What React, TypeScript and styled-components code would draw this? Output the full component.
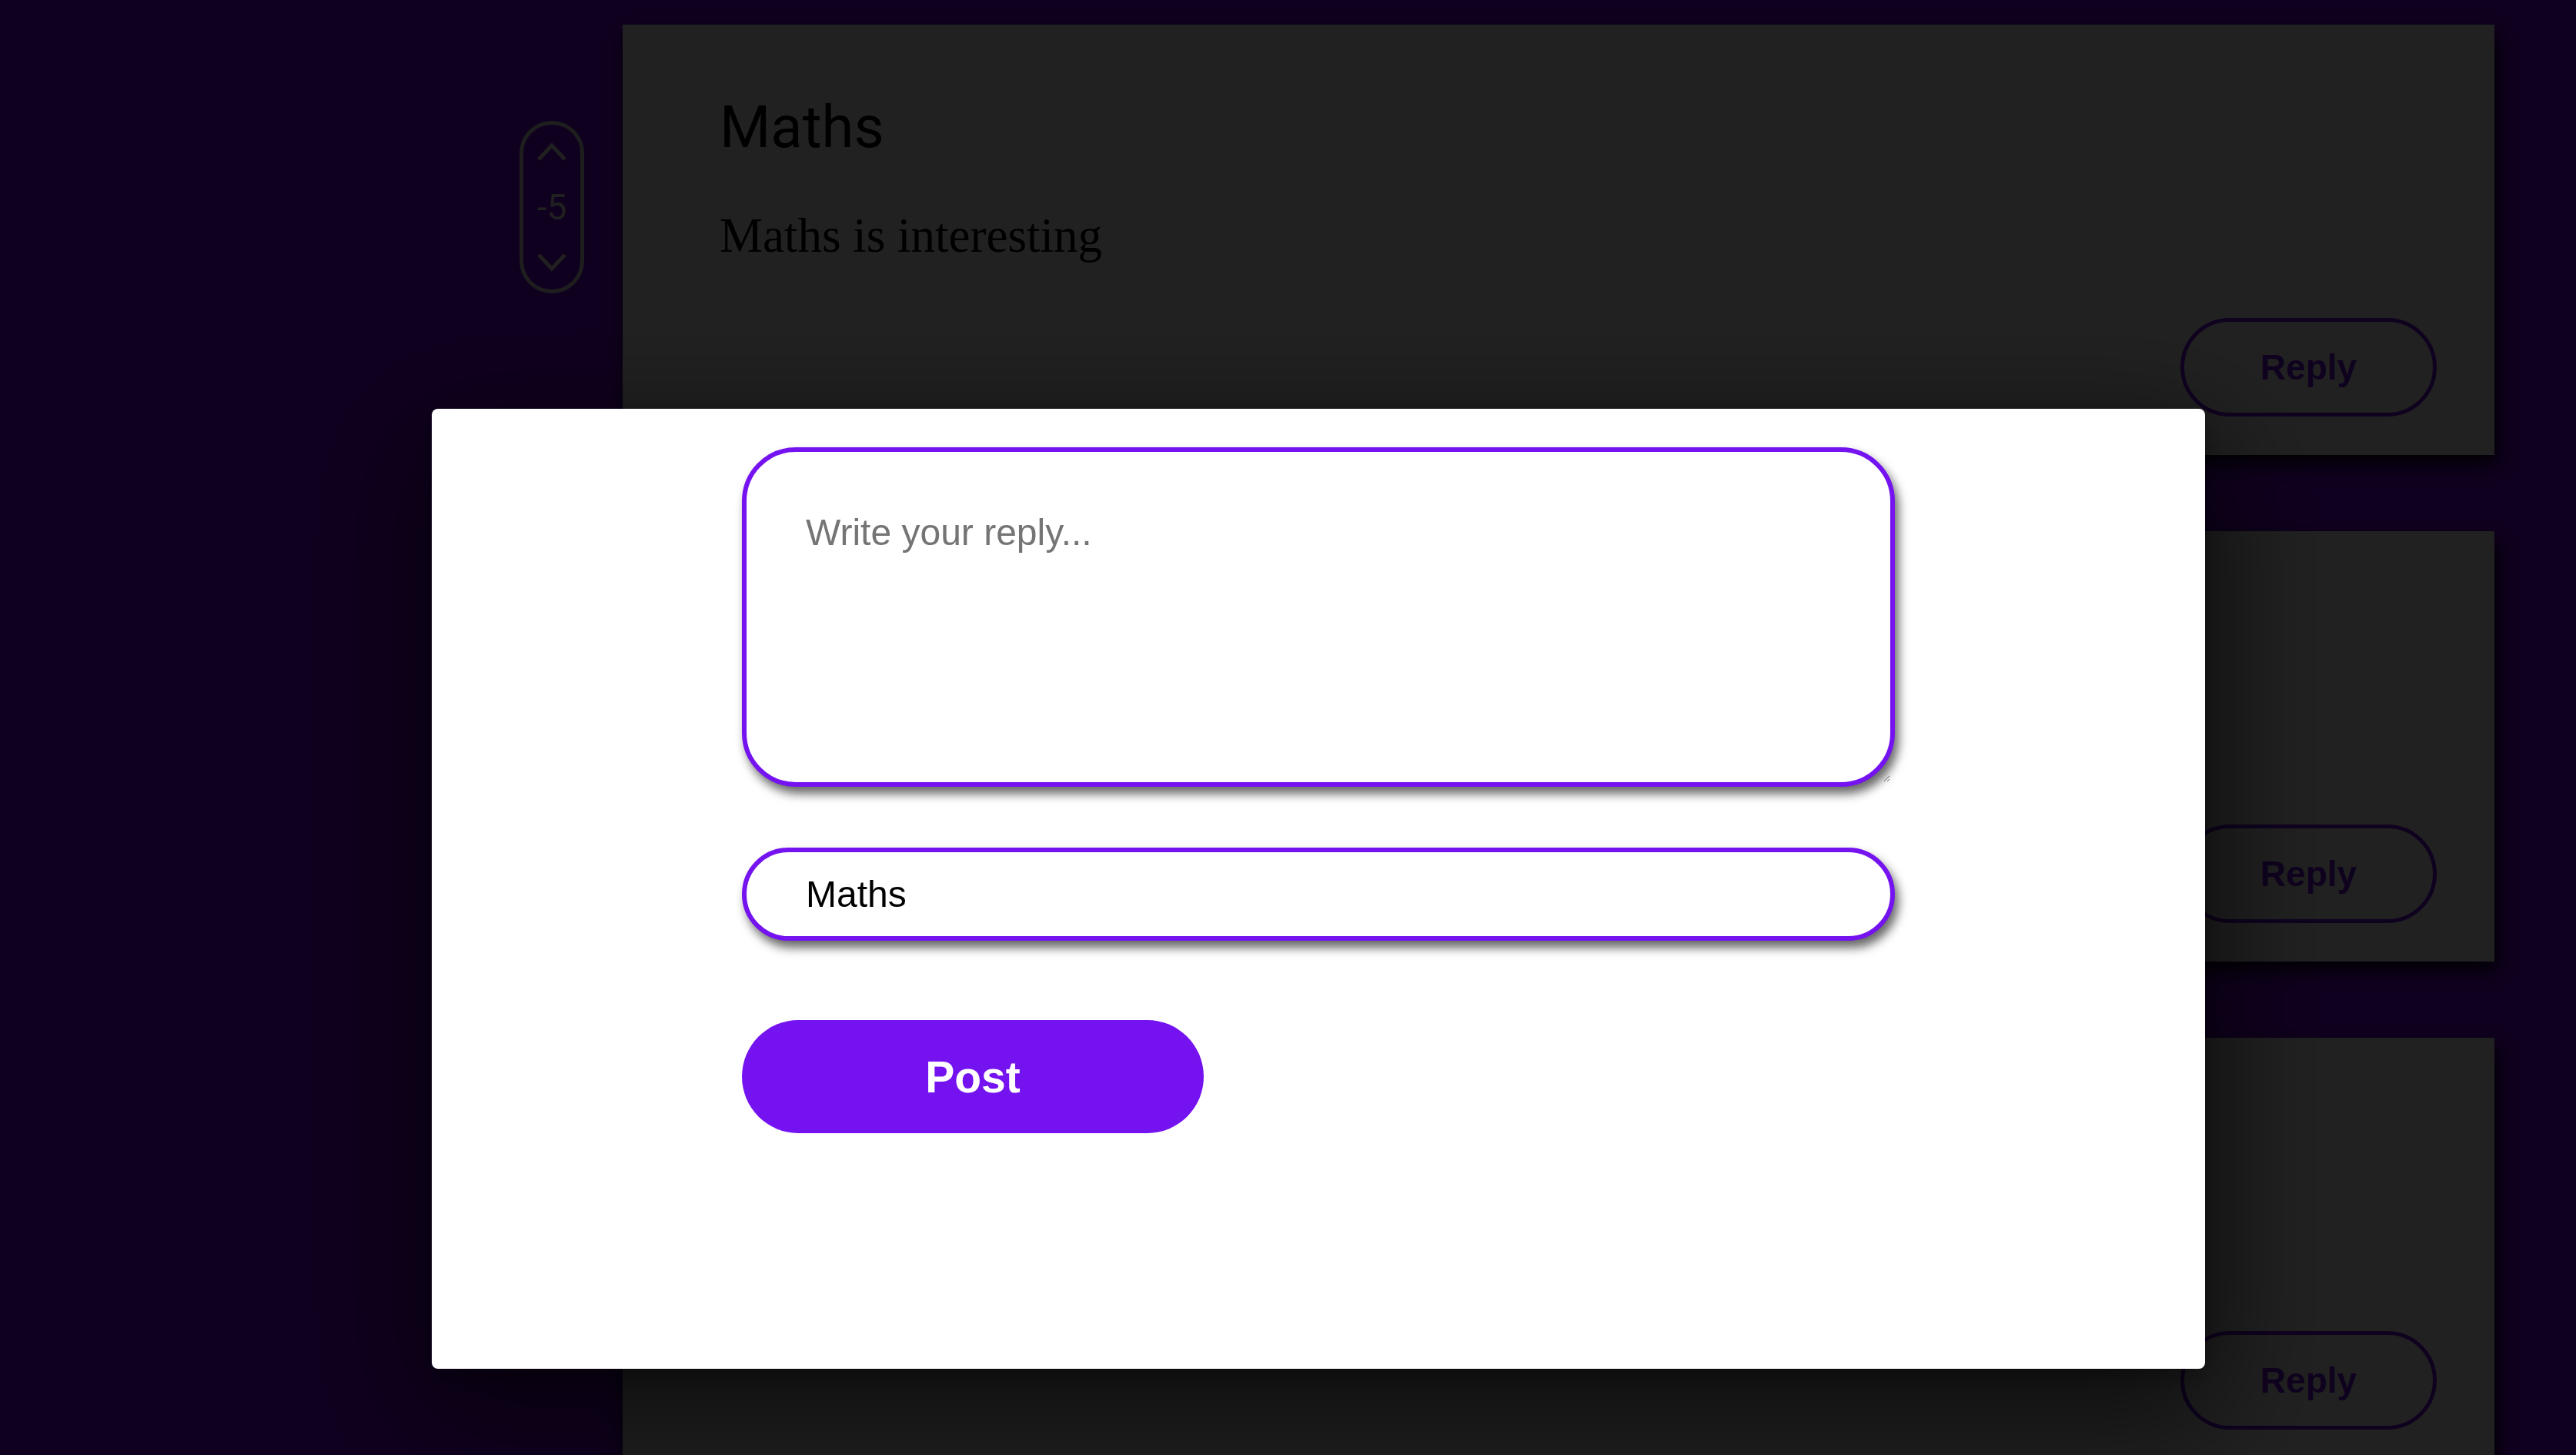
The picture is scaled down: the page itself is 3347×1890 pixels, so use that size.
import React from "react";
import styled, { createGlobalStyle } from "styled-components";

const PURPLE = "#7513f0";

const GlobalStyle = createGlobalStyle`
  html, body {
    margin: 0;
    padding: 0;
    background: #7b00ee;
    overflow: hidden;
  }
  *, *::before, *::after { box-sizing: border-box; }
`;

const Feed = styled.main`
  display: flex;
  flex-direction: column;
  gap: 99px;
  height: 100vh;
  overflow: hidden;
  padding: 32px 106px 0 675px;
`;

const PostRow = styled.article`
  display: flex;
  align-items: flex-start;
  gap: 50px;
  flex: none;
`;

const VotePill = styled.div`
  flex: none;
  width: 84px;
  height: 224px;
  margin-top: 125px;
  border: 5px solid #e2e2e2;
  border-radius: 42px;
  padding: 22px 0;
  display: flex;
  flex-direction: column;
  align-items: center;
  justify-content: space-between;
`;

const VoteCount = styled.span`
  font-family: Roboto, "Liberation Sans", sans-serif;
  font-size: 46px;
  line-height: 54px;
  color: #f2f2f2;
`;

const Chevron = styled.svg`
  display: block;
  width: 40px;
  height: 26px;
`;

const Card = styled.section`
  flex: 1;
  height: 559px;
  background: #ffffff;
  display: flex;
  flex-direction: column;
  padding: 88px 75px 50px 126px;
  box-shadow: 4px 12px 24px rgba(0, 0, 0, 0.9);
`;

const Title = styled.h2`
  margin: 0;
  font-family: Roboto, "Liberation Sans", sans-serif;
  font-weight: 400;
  font-size: 76px;
  line-height: normal;
  color: #000;
`;

const Body = styled.p`
  margin: 60px 0 0;
  font-family: "Liberation Serif", "Times New Roman", serif;
  font-size: 63px;
  line-height: normal;
  color: #000;
`;

const ReplyButton = styled.button`
  margin-top: auto;
  align-self: flex-end;
  width: 333px;
  height: 128px;
  border: 5px solid ${PURPLE};
  border-radius: 64px;
  background: transparent;
  color: ${PURPLE};
  font-family: "Liberation Sans", Arial, sans-serif;
  font-weight: 700;
  font-size: 46px;
  cursor: pointer;
`;

const Backdrop = styled.div`
  position: fixed;
  inset: 0;
  background: rgba(0, 0, 0, 0.87);
  z-index: 10;
`;

const Modal = styled.div`
  position: fixed;
  left: 561px;
  top: 531px;
  width: 2304px;
  height: 1247px;
  background: #ffffff;
  border-radius: 8px;
  z-index: 11;
  box-shadow: 0 50px 160px 20px rgba(0, 0, 0, 0.6), 0 10px 30px rgba(0, 0, 0, 0.3);
`;

const ReplyForm = styled.form`
  width: 1498px;
  margin: 0 auto;
  padding-top: 50px;
  display: flex;
  flex-direction: column;
  align-items: flex-start;
`;

const fieldStyles = `
  width: 100%;
  border: 6px solid ${PURPLE};
  background: #ffffff;
  color: #000;
  font-family: "Liberation Sans", Arial, sans-serif;
  font-size: 48px;
  line-height: normal;
  outline: none;
  box-shadow: 5px 9px 13px rgba(0, 0, 0, 0.6);
  &::placeholder { color: #757575; }
`;

const ReplyText = styled.textarea`
  ${fieldStyles}
  display: block;
  height: 441px;
  border-radius: 70px;
  padding: 77px;
`;

const TopicInput = styled.input`
  ${fieldStyles}
  margin-top: 79px;
  border-radius: 61px;
  padding: 27px 77px;
`;

const PostButton = styled.button`
  margin-top: 103px;
  width: 600px;
  height: 147px;
  border: none;
  border-radius: 74px;
  background: ${PURPLE};
  color: #ffffff;
  font-family: "Liberation Sans", Arial, sans-serif;
  font-weight: 700;
  font-size: 57px;
  cursor: pointer;
`;

const ChevronUp = () => (
  <Chevron viewBox="0 0 40 26" fill="none">
    <path d="M3 23 L20 5 L37 23" stroke="#f2f2f2" strokeWidth="5" />
  </Chevron>
);

const ChevronDown = () => (
  <Chevron viewBox="0 0 40 26" fill="none">
    <path d="M3 3 L20 21 L37 3" stroke="#f2f2f2" strokeWidth="5" />
  </Chevron>
);

const posts = [
  { id: 1, title: "Maths", body: "Maths is interesting", votes: -5 },
  { id: 2, title: "Physics", body: "Physics is fun", votes: 2 },
  { id: 3, title: "History", body: "History matters", votes: 0 },
];

export default function App() {
  return (
    <>
      <GlobalStyle />
      <Feed>
        {posts.map((p) => (
          <PostRow key={p.id}>
            <VotePill>
              <ChevronUp />
              <VoteCount>{p.votes}</VoteCount>
              <ChevronDown />
            </VotePill>
            <Card>
              <Title>{p.title}</Title>
              <Body>{p.body}</Body>
              <ReplyButton type="button">Reply</ReplyButton>
            </Card>
          </PostRow>
        ))}
      </Feed>
      <Backdrop />
      <Modal role="dialog">
        <ReplyForm onSubmit={(e) => e.preventDefault()}>
          <ReplyText placeholder="Write your reply..." />
          <TopicInput type="text" defaultValue="Maths" />
          <PostButton type="submit">Post</PostButton>
        </ReplyForm>
      </Modal>
    </>
  );
}
